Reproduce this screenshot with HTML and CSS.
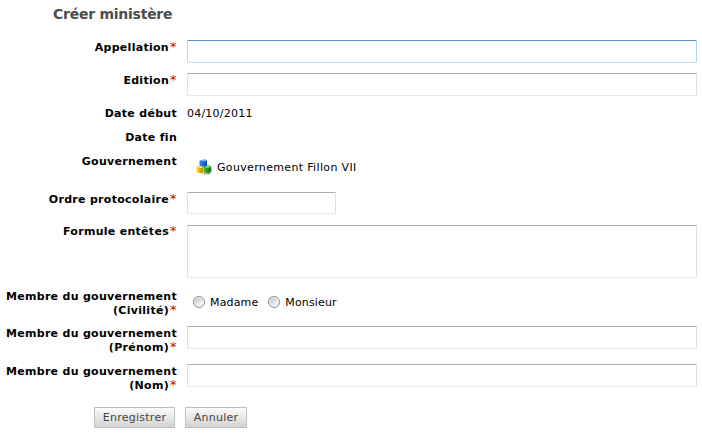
FILE: index.html
```html
<!DOCTYPE html>
<html lang="fr">
<head>
<meta charset="utf-8">
<title>Créer ministère</title>
<link rel="stylesheet" href="styles.css">
</head>
<body>
<form class="form">
<h1 class="title"><span class="t-title">Créer ministère</span></h1>
<div class="row"><label class="label" for="app">Appellation<span class="req">*</span></label><input class="field focus" id="app" type="text"></div>
<div class="row"><label class="label" for="edi">Edition<span class="req">*</span></label><input class="field" id="edi" type="text"></div>
<div class="row short"><span class="label">Date début</span><span class="value">04/10/2011</span></div>
<div class="row short"><span class="label">Date fin</span></div>
<div class="row gov"><span class="label">Gouvernement</span>
<div class="entity"><svg class="cubes" width="16" height="16" viewBox="0 0 16 16">
<defs><linearGradient id="b" x2="1"><stop offset="0" stop-color="#3b8cf0"/><stop offset="1" stop-color="#0b48b0"/></linearGradient><linearGradient id="y" x2="1"><stop offset="0" stop-color="#ffe014"/><stop offset="1" stop-color="#bd8500"/></linearGradient><linearGradient id="g" x2="1"><stop offset="0" stop-color="#42bf30"/><stop offset="1" stop-color="#08740c"/></linearGradient></defs>
<path d="M2 14h5l1 1.500h6l2-3V8l-2 6z" fill="#777" opacity=".55"/>
<path d="M3.500 1.500 9 .5l2 1v6L9 8.500l-5.500-.8z" fill="url(#b)"/><path d="m3.500 1.500 5.500-1 2 1-2 1z" fill="#78baff"/>
<path d="m.5 8 4.500-1L7.500 8v5.500L6 14.500l-4-.8L.5 12z" fill="url(#y)"/><path d="m.5 8 4.500-1L7.500 8 5 9z" fill="#fff36a"/>
<path d="m8 8 5-2 2 1.500V12l-2 2.500-5-1z" fill="url(#g)"/><path d="m8 8 5-2 2 1.500-3 1.500z" fill="#7be45c"/></svg><span class="name">Gouvernement Fillon VII</span></div></div>
<div class="row"><label class="label" for="ord">Ordre protocolaire<span class="req">*</span></label><input class="field small" id="ord" type="text"></div>
<div class="row tall"><label class="label" for="form">Formule entêtes<span class="req">*</span></label><textarea class="field area" id="form"></textarea></div>
<div class="row civil"><span class="label">Membre du gouvernement<br>(Civilité)<span class="req">*</span></span>
<div class="choices"><label class="choice"><input class="radio" type="radio" name="civ"><span>Madame</span></label><label class="choice"><input class="radio" type="radio" name="civ"><span>Monsieur</span></label></div></div>
<div class="row person"><label class="label" for="pre">Membre du gouvernement<br>(Prénom)<span class="req">*</span></label><input class="field" id="pre" type="text"></div>
<div class="row last"><label class="label" for="nom">Membre du gouvernement<br>(Nom)<span class="req">*</span></label><input class="field" id="nom" type="text"></div>
<div class="actions"><button class="btn save" type="button">Enregistrer</button><button class="btn cancel" type="button">Annuler</button></div>
</form>
</body>
</html>
```
FILE: styles.css
```css
* { box-sizing: border-box; }
body { margin: 0; background: #fff; color: #000; font: 11px/14px Verdana, "DejaVu Sans", sans-serif; overflow: hidden; }
.form { width: 702px; height: 434px; }
.title { margin: 0; height: 40px; padding: 5px 0 0 53px; color: #4c4c4c; font-size: 14px; line-height: 18px; letter-spacing: -.25px; }
.row { display: grid; grid-template-columns: 177px 510px; column-gap: 10px; align-items: start; height: 33px; }
.short { height: 24px; }
.gov { height: 38px; }
.tall { height: 64px; }
.civil { height: 37px; }
.person { height: 38px; }
.last { height: 43px; }
.label { padding-top: 1px; text-align: right; font-weight: bold; white-space: nowrap; letter-spacing: .29px; }
.tall .label { padding-top: 0; }
.value { padding-top: 1px; letter-spacing: .22px; }
.req { display: inline-block; width: 8px; padding-left: 1px; color: #c00; font-size: 13px; font-weight: normal; line-height: 10px; text-align: left; letter-spacing: 0; }
.field { display: block; width: 510px; height: 23px; margin: 0; padding: 2px; border: 1px solid; border-color: #abadb3 #dbdfe6 #e3e9ef #e2e3ea; border-radius: 1px; background: #fff; outline: none; font: inherit; }
.focus { border-color: #5794bf #b7d5ea #c7e2f1 #c5daed; }
.small { width: 149px; height: 22px; }
.area { height: 53px; resize: none; }
.entity { display: flex; align-items: center; gap: 5px; height: 16px; margin: 5px 0 0 9px; }
.name { padding-top: 2px; letter-spacing: .34px; }
.choices { display: flex; align-items: center; gap: 10px; margin: 6px 0 0 6px; }
.choice { display: flex; align-items: center; gap: 5px; height: 14px; letter-spacing: .15px; }
.choice span { padding-top: 1px; }
.radio { appearance: none; width: 12px; height: 12px; margin: 0; border: 1px solid #8e8f8f; border-radius: 50%; background: linear-gradient(135deg, #b9bec2, #f6f6f6 75%); box-shadow: inset 0 0 0 1px #f4f4f4; }
.actions { display: flex; gap: 10px; padding-left: 94px; }
.btn { height: 21px; margin: 0; padding: 1px 0 0; border: 1px solid #b9c0c7; background: linear-gradient(#fbfbfb, #d3d3d3); color: #444; font: inherit; letter-spacing: .25px; }
.save { width: 81px; }
.cancel { width: 62px; }
```
